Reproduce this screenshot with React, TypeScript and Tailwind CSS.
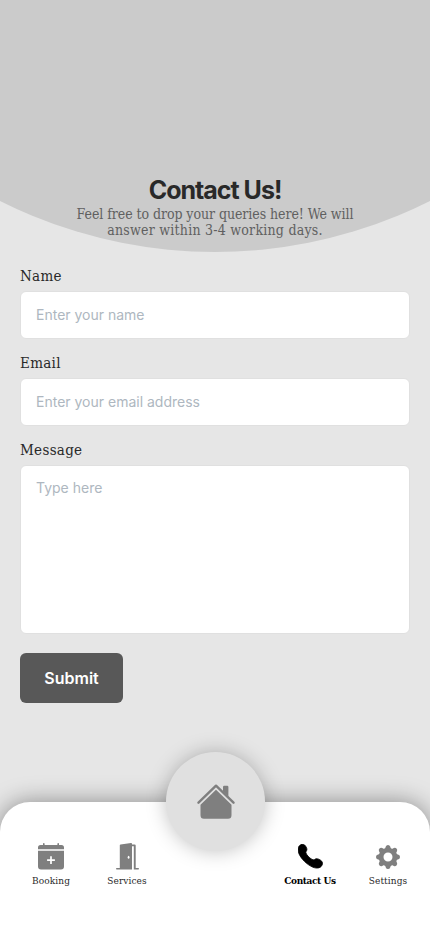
import { ReactNode } from "react";

const slab = "font-['Roboto_Slab','DejaVu_Serif_Condensed','DejaVu_Serif',serif]";

const HomeIcon = () => (
    <svg width="38" height="35" viewBox="0 0 38 35" fill="#7f7f7f">
        <path d="M26 3a1.200 1.200 0 0 1 1.200-1.200h3A1.200 1.200 0 0 1 31.400 3v9.700L26 7.500z" />
        <path d="M1.500 18.700 19 1.700l17.500 17" fill="none" stroke="#7f7f7f" strokeWidth="2.400" strokeLinecap="round" strokeLinejoin="round" />
        <path d="M19 5.800 34.500 20.700v10.600a3.500 3.500 0 0 1-3.500 3.500H7a3.500 3.500 0 0 1-3.500-3.500V20.700z" />
    </svg>
);

const BookingIcon = () => (
    <svg width="26" height="27" viewBox="0 0 26 27">
        <path d="M0 6.200V4.500A2.500 2.500 0 0 1 2.500 2H5V.8a.8.8 0 0 1 1.600 0V2h12.800V.8a.8.8 0 0 1 1.600 0V2h2.500A2.500 2.500 0 0 1 26 4.500v1.700z" fill="#7f7f7f" />
        <path d="M0 7.700h26v15.800a3 3 0 0 1-3 3H3a3 3 0 0 1-3-3z" fill="#7f7f7f" />
        <path d="M13 13.300v7.800M9.100 17.200h7.800" stroke="#fff" strokeWidth="1.700" />
    </svg>
);

const ServicesIcon = () => (
    <svg width="23" height="27" viewBox="0 0 23 27">
        <path d="M3.800 2.300Q3.800 1.600 4.600 1.500L15 .1q1-.1 1 .8V26.500H.7a.7.7 0 0 1 0-1.500h3.100z" fill="#7f7f7f" />
        <path d="M16 1.400h2.700q1 0 1 1V25h2.600a.7.7 0 0 1 0 1.500h-4.500V3.200H16z" fill="#7f7f7f" />
        <ellipse cx="12.600" cy="14.300" rx=".9" ry="1.500" fill="#fff" />
    </svg>
);

const PhoneIcon = () => (
    <svg width="25" height="25" viewBox="0 0 25 25">
        <path d="M1.600 1.600C3 .2 5.300-.2 6.600 1c1.200 1.200 2.500 3.100 2.300 4.700-.1 1.300-1.300 1.800-1 3.100.6 2.400 4.700 6.400 7.200 7 1.300.3 1.800-.9 3.100-1.100 1.700-.2 4.200 1.100 5.500 2.500 1.400 1.500.9 3.600-.5 5.200-2.400 2.600-7.200 2.300-12.900-1.800C4.700 16.500.5 11.100.1 6.300-.1 4.200.4 2.800 1.600 1.600z" fill="#000" stroke="#000" strokeWidth=".8" />
    </svg>
);

const SettingsIcon = () => (
    <svg width="24" height="24" viewBox="0 0 24 24">
        <g fill="#7f7f7f">
            {[0, 45, 90, 135, 180, 225, 270, 315].map((angle) => (
                <path key={angle} d="M8.600 5 9.800 1.500Q10.300 0 12 0t2.200 1.500L15.400 5z" transform={`rotate(${angle} 12 12)`} />
            ))}
        </g>
        <circle cx="12" cy="12" r="6.900" fill="none" stroke="#7f7f7f" strokeWidth="4.800" />
    </svg>
);

const NavItem = ({ label, icon, active, className }: { label: string; icon: ReactNode; active?: boolean; className: string }) => (
    <button className={`flex flex-col items-center ${className}`}>
        <span className="flex h-[27px] items-center">{icon}</span>
        <span className={`mt-1 whitespace-nowrap text-[10px] leading-[13px] ${active ? "font-bold tracking-[-0.4px] text-black" : "tracking-[0.1px] text-[#292929]"}`}>
            {label}
        </span>
    </button>
);

const Field = ({ id, label, children }: { id: string; label: string; children: ReactNode }) => (
    <div className="flex flex-col">
        <label htmlFor={id} className={`${slab} mb-[5px] text-[15px] leading-[20px] tracking-[0.3px] text-[#292929]`}>{label}</label>
        {children}
    </div>
);

const inputStyle = "w-full rounded-[6px] border border-[#e0e0e0] bg-white px-[15px] text-[14px] text-[#292929] outline-none placeholder:text-[#aeb7c0]";

const App = () => {
    return (
        <div className="flex h-[932px] w-full flex-col overflow-hidden bg-[#e6e6e6] font-['Inter',sans-serif]">
            <header className="relative flex h-[252px] shrink-0 items-end justify-center overflow-hidden">
                <div className="h-[958px] w-[958px] shrink-0 rounded-full bg-[#cbcbcb]"></div>
                <div className="absolute inset-x-0 top-[175px] text-center">
                    <h1 className="text-[25px] font-bold leading-[31px] tracking-[-1px] text-[#292929]">Contact Us!</h1>
                    <p className={`${slab} text-[14px] font-light leading-[16px] text-[#606060]`}>
                        <span className="tracking-[-0.06px]">Feel free to drop your queries here! We will</span>
                        <br />
                        <span className="tracking-[0.24px]">answer within 3-4 working days.</span>
                    </p>
                </div>
            </header>

            <form className="flex flex-1 flex-col gap-[14px] px-5 pt-[14px]" onSubmit={(e) => e.preventDefault()}>
                <Field id="name" label="Name">
                    <input id="name" className={`${inputStyle} h-[48px] pb-[2px]`} placeholder="Enter your name" />
                </Field>
                <Field id="email" label="Email">
                    <input id="email" className={`${inputStyle} h-[48px] pb-[2px]`} placeholder="Enter your email address" />
                </Field>
                <Field id="message" label="Message">
                    <textarea id="message" className={`${inputStyle} h-[169px] resize-none py-[12px] leading-[20px]`} placeholder="Type here" />
                </Field>
                <button className="mt-[5px] h-[50px] w-[103px] rounded-[6px] bg-[#585858] text-[16px] font-semibold text-white">Submit</button>
            </form>

            <nav className={`${slab} relative flex h-[130px] shrink-0 rounded-t-[30px] bg-white pt-[41px] shadow-[0_0_24px_rgba(0,0,0,0.4)]`}>
                <NavItem className="ml-[26px] w-[50px] self-start" label="Booking" icon={<BookingIcon />} />
                <NavItem className="ml-[26px] w-[50px] self-start" label="Services" icon={<ServicesIcon />} />
                <NavItem active className="ml-[128px] w-[60px] self-start" label="Contact Us" icon={<PhoneIcon />} />
                <NavItem className="ml-[23px] w-[50px] self-start" label="Settings" icon={<SettingsIcon />} />
                <button className="absolute left-[166px] top-[-50px] flex h-[99px] w-[99px] items-center justify-center rounded-full bg-[#e0e0e0] shadow-[0_0_20px_rgba(0,0,0,0.25)]">
                    <HomeIcon />
                </button>
            </nav>
        </div>
    );
};

export default App;
